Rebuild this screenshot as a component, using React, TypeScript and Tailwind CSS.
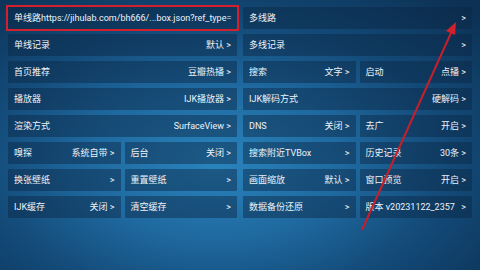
import React from "react";

type Cell = { label: string; value?: string };

function Item({ label, value, className = "" }: Cell & { className?: string }) {
  return (
    <div
      className={`flex h-[22px] items-center justify-between rounded-[1px] bg-[rgba(12,38,66,0.45)] px-[6px] text-[9px] leading-none text-[#eef3f7] ${className}`}
    >
      <span className="whitespace-nowrap">{label}</span>
      {value !== undefined && (
        <span className="whitespace-nowrap">
          {value}
          {value ? " " : ""}&gt;
        </span>
      )}
    </div>
  );
}

function Pair({ a, b }: { a: Cell; b: Cell }) {
  return (
    <div className="grid grid-cols-2 gap-[4px]">
      <Item {...a} />
      <Item {...b} />
    </div>
  );
}

export default function App() {
  return (
    <div
      className="relative h-[270px] w-[480px] overflow-hidden bg-[radial-gradient(ellipse_75%_80%_at_45%_60%,#2a84bd_0%,#1f6aa0_35%,#134a78_65%,#0c3154_100%)]"
      style={{ fontFamily: 'Roboto, "Noto Sans CJK SC", sans-serif' }}
    >
      <div className="grid grid-cols-2 gap-x-[6px] px-[8px] pt-[7px]">
        <div className="flex flex-col gap-[5px]">
          <div className="relative">
            <Item label="单线路https://jihulab.com/bh666/...box.json?ref_type=" />
            <div className="absolute -inset-[2px] border-2 border-[#d4202c]" />
          </div>
          <Item label="单线记录" value="默认" />
          <Item label="首页推荐" value="豆瓣热播" />
          <Item label="播放器" value="IJK播放器" />
          <Item label="渲染方式" value="SurfaceView" />
          <Pair a={{ label: "嗅探", value: "系统自带" }} b={{ label: "后台", value: "关闭" }} />
          <Pair a={{ label: "换张壁纸", value: "" }} b={{ label: "重置壁纸", value: "" }} />
          <Pair a={{ label: "IJK缓存", value: "关闭" }} b={{ label: "清空缓存", value: "" }} />
        </div>
        <div className="flex flex-col gap-[5px]">
          <Item label="多线路" value="" />
          <Item label="多线记录" value="" />
          <Pair a={{ label: "搜索", value: "文字" }} b={{ label: "启动", value: "点播" }} />
          <Item label="IJK解码方式" value="硬解码" />
          <Pair a={{ label: "DNS", value: "关闭" }} b={{ label: "去广", value: "开启" }} />
          <Pair a={{ label: "搜索附近TVBox", value: "" }} b={{ label: "历史记录", value: "30条" }} />
          <Pair a={{ label: "画面缩放", value: "默认" }} b={{ label: "窗口预览", value: "开启" }} />
          <Pair a={{ label: "数据备份还原", value: "" }} b={{ label: "版本 v20231122_2357", value: "" }} />
        </div>
      </div>
      <svg className="pointer-events-none absolute left-0 top-0" width="480" height="270">
        <line x1="362" y1="230" x2="451" y2="33" stroke="#c81e2a" strokeWidth="2" />
        <polygon points="456,22 455,35 446,31" fill="#d4202c" />
      </svg>
    </div>
  );
}
